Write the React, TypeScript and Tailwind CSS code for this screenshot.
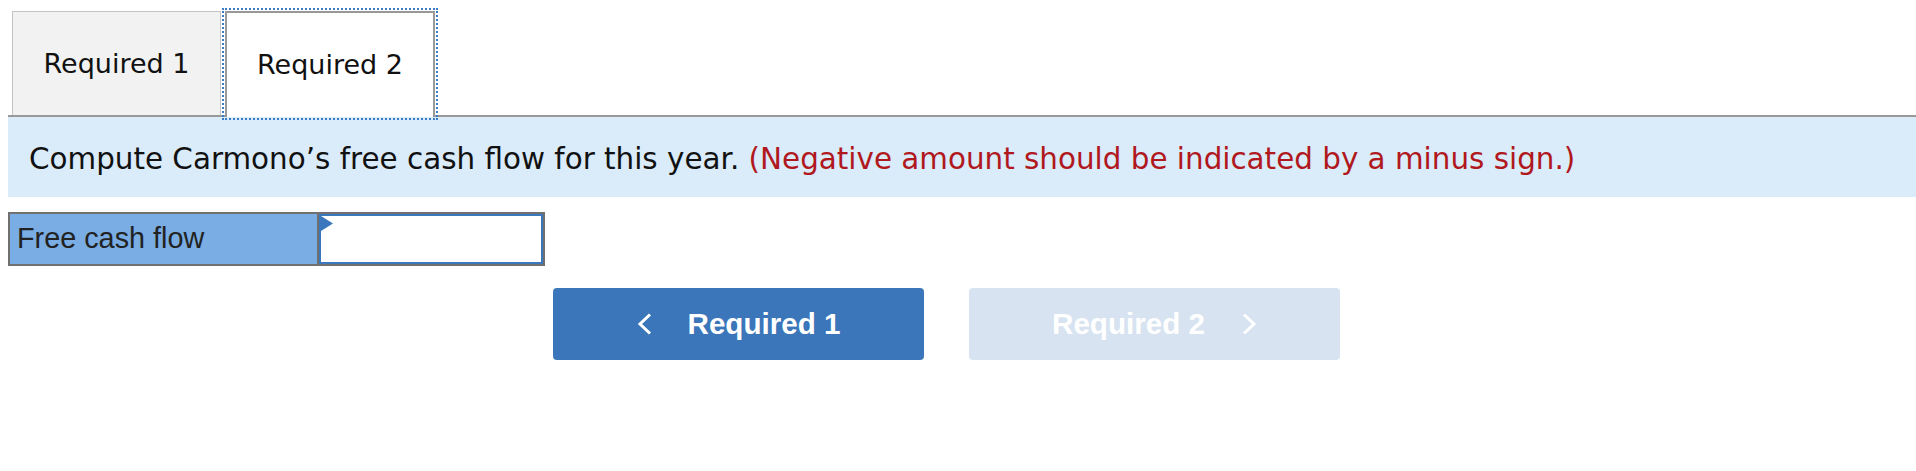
import React from "react";

function Chevron({ dir }: { dir: "left" | "right" }) {
  return (
    <svg width="15" height="22" viewBox="0 0 15 22" className="shrink-0">
      <polyline
        points={dir === "left" ? "13,1.5 3,11 13,20.5" : "2,1.5 12,11 2,20.5"}
        fill="none"
        stroke="white"
        strokeWidth="3"
      />
    </svg>
  );
}

export default function App() {
  return (
    <div className="w-[1916px] h-[471px] bg-white pl-2 pt-[11px] font-['DejaVu_Sans',sans-serif]">
      {/* tabs */}
      <div className="flex items-end h-[106px] pl-1 border-b-2 border-[#999]">
        <div className="w-[209px] h-[104px] flex items-center justify-center pt-[2px] bg-[#f2f2f2] border border-b-0 border-[#c4c4c4] text-[27px] text-[#111]">
          Required 1
        </div>
        <div className="relative w-[210px] h-[106px] -mb-[2px] ml-1 flex items-center justify-center bg-white border-2 border-b-0 border-[#999] text-[27px] text-[#111] outline-2 outline-dotted outline-[#3a7dc6] outline-offset-[1px]">
          Required 2
        </div>
      </div>

      {/* instruction */}
      <div className="h-[80px] bg-[#daebf9] flex items-center pl-[21px] pt-[5px] text-[29.4px] text-[#111]">
        <span>
          Compute Carmono’s free cash flow for this year.{" "}
          <span className="text-[#b0181d]">(Negative amount should be indicated by a minus sign.)</span>
        </span>
      </div>

      {/* answer table */}
      <div className="mt-[15px] w-[537px] h-[54px] flex border-2 border-[#707070]">
        <div className="w-[309px] border-r-2 border-[#707070] bg-[#79ade3] flex items-center pl-[7px] text-[28.8px] text-[#222] font-['Liberation_Sans',Arial,sans-serif]">
          Free cash flow
        </div>
        <div className="relative flex-1 bg-white border-2 border-[#3b77bd]">
          <svg width="13" height="15" viewBox="0 0 13 15" className="absolute left-0 top-0">
            <polygon points="0,0 12,7.5 0,15" fill="#3b77bd" />
          </svg>
        </div>
      </div>

      {/* navigation */}
      <div className="mt-[22px] flex justify-center gap-[45px] pr-[31px] font-['Liberation_Sans',Arial,sans-serif] text-[29.6px] font-bold text-white">
        <button className="w-[371px] h-[72px] rounded-[4px] bg-[#3a76b9] flex items-center justify-center gap-[36px]">
          <Chevron dir="left" />
          <span>Required 1</span>
        </button>
        <button className="w-[371px] h-[72px] rounded-[4px] bg-[#d7e3f0] flex items-center justify-center gap-[37px]" disabled>
          <span>Required 2</span>
          <Chevron dir="right" />
        </button>
      </div>
    </div>
  );
}
